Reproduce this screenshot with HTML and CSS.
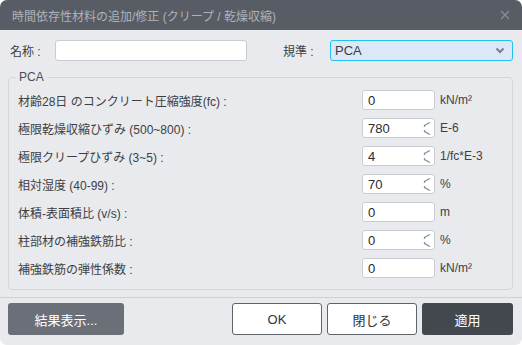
FILE: index.html
```html
<!DOCTYPE html>
<html lang="ja">
<head>
    <meta charset="UTF-8">
    <title>時間依存性材料の追加/修正</title>
    <link rel="stylesheet" href="styles.css">
</head>
<body>
    <div class="dialog">
        <div class="titlebar">
            <span class="title">時間依存性材料の追加/修正 (クリープ / 乾燥収縮)</span>
            <svg class="close" width="10" height="10" viewBox="0 0 10 10"><path d="M1 1L9 9M9 1L1 9" stroke="#8a8f96" stroke-width="1.2"/></svg>
        </div>

        <div class="name-row">
            <label class="name-label">名称 :</label>
            <input type="text" class="name-input">
            <label class="code-label">規準 :</label>
            <div class="select">
                <span>PCA</span>
                <svg width="10" height="7" viewBox="0 0 10 7"><path d="M1.5 1.5L5 5L8.5 1.5" fill="none" stroke="#7a7e85" stroke-width="2"/></svg>
            </div>
        </div>

        <fieldset class="group">
            <legend>PCA</legend>
            <div class="row">
                <label>材齢28日 のコンクリート圧縮強度(fc) :</label>
                <div class="num"><span>0</span></div>
                <span class="unit">kN/m²</span>
            </div>
            <div class="row">
                <label>極限乾燥収縮ひずみ (500~800) :</label>
                <div class="num spin"><span>780</span><i class="arrows"></i></div>
                <span class="unit">E-6</span>
            </div>
            <div class="row">
                <label>極限クリープひずみ (3~5) :</label>
                <div class="num spin"><span>4</span><i class="arrows"></i></div>
                <span class="unit">1/fc*E-3</span>
            </div>
            <div class="row">
                <label>相対湿度 (40-99) :</label>
                <div class="num spin"><span>70</span><i class="arrows"></i></div>
                <span class="unit">%</span>
            </div>
            <div class="row">
                <label>体積-表面積比 (v/s) :</label>
                <div class="num"><span>0</span></div>
                <span class="unit">m</span>
            </div>
            <div class="row">
                <label>柱部材の補強鉄筋比 :</label>
                <div class="num spin"><span>0</span><i class="arrows"></i></div>
                <span class="unit">%</span>
            </div>
            <div class="row">
                <label>補強鉄筋の弾性係数 :</label>
                <div class="num"><span>0</span></div>
                <span class="unit">kN/m²</span>
            </div>
        </fieldset>

        <div class="footer">
            <button class="btn btn-grey">結果表示...</button>
            <div class="spacer"></div>
            <button class="btn btn-white">OK</button>
            <button class="btn btn-white">閉じる</button>
            <button class="btn btn-dark">適用</button>
        </div>
    </div>

    <script>
        // spinner glyphs for the number boxes
        document.querySelectorAll('.arrows').forEach(el => {
            el.innerHTML = '<svg width="8" height="15" viewBox="0 0 8 15"><path d="M7 1.5L1.5 4.5V6M1.5 9V10.5L7 13.5" fill="none" stroke="#8d9196" stroke-width="1.3"/></svg>';
        });
    </script>
</body>
</html>
```

FILE: styles.css
```css
body {
    margin: 0;
    background-color: #ffffff;
    font-family: "Liberation Sans", "Noto Sans CJK JP", sans-serif;
    font-size: 12px;
    color: #3c3f44;
}

.dialog {
    width: 522px;
    height: 345px;
    background-color: #e9eaed;
    border-radius: 7px;
    overflow: hidden;
    display: flex;
    flex-direction: column;
}

.titlebar {
    height: 30px;
    background-color: #585d65;
    display: flex;
    align-items: center;
    padding: 0 12px;
    flex-shrink: 0;
}

.title {
    flex: 1;
    color: #aeb2b8;
    font-size: 12px;
}

.name-row {
    display: flex;
    align-items: center;
    height: 21px;
    margin-top: 10px;
    padding-left: 10px;
}

.name-label {
    width: 45px;
}

.name-input {
    width: 192px;
    height: 21px;
    box-sizing: border-box;
    border: 1px solid #c9ccd1;
    border-radius: 3px;
    background: #ffffff;
    padding: 0 6px;
    margin: 0;
}

.code-label {
    margin-left: 36px;
    width: 47px;
}

.select {
    width: 183px;
    height: 21px;
    box-sizing: border-box;
    border: 1.5px solid #1ec2ef;
    border-radius: 3px;
    background-color: #dce7f8;
    display: flex;
    align-items: center;
    justify-content: space-between;
    padding: 0 7px 0 4px;
    font-size: 13px;
    color: #3a3d42;
}

.group {
    margin: 9px 9px 0 8px;
    padding: 6px 0 0 9px;
    height: 220px;
    box-sizing: border-box;
    border: 1px solid #d3d5d9;
    border-radius: 4px;
    flex-shrink: 0;
}

.group legend {
    padding: 0 3px;
    margin-left: -2px;
    color: #4a4d52;
}

.row {
    display: flex;
    align-items: center;
    height: 20px;
    margin-bottom: 8px;
}

.row label {
    width: 344px;
    flex-shrink: 0;
}

.num {
    width: 73px;
    height: 20px;
    box-sizing: border-box;
    border: 1px solid #c9ccd1;
    border-radius: 3px;
    background-color: #ffffff;
    display: flex;
    align-items: center;
    justify-content: space-between;
    padding: 0 3px 0 5px;
    font-size: 13px;
    color: #2b2b2b;
}

.arrows {
    display: flex;
}

.unit {
    margin-left: 5px;
}

.footer {
    margin-top: 7px;
    border-top: 1px solid #cdd0d4;
    display: flex;
    padding: 5px 9px 0 8px;
    gap: 5px;
}

.spacer {
    flex: 1;
}

.btn {
    height: 32px;
    width: 90px;
    border-radius: 3px;
    font-family: "Liberation Sans", "Noto Sans CJK JP", sans-serif;
    font-size: 13px;
    cursor: pointer;
    padding: 0;
}

.btn-grey {
    width: 116px;
    background-color: #6b7078;
    color: #ffffff;
    border: none;
}

.btn-white {
    background-color: #ffffff;
    color: #333333;
    border: 1px solid #5e6269;
}

.btn-dark {
    width: 91px;
    background-color: #43484f;
    color: #ffffff;
    border: none;
}
```
